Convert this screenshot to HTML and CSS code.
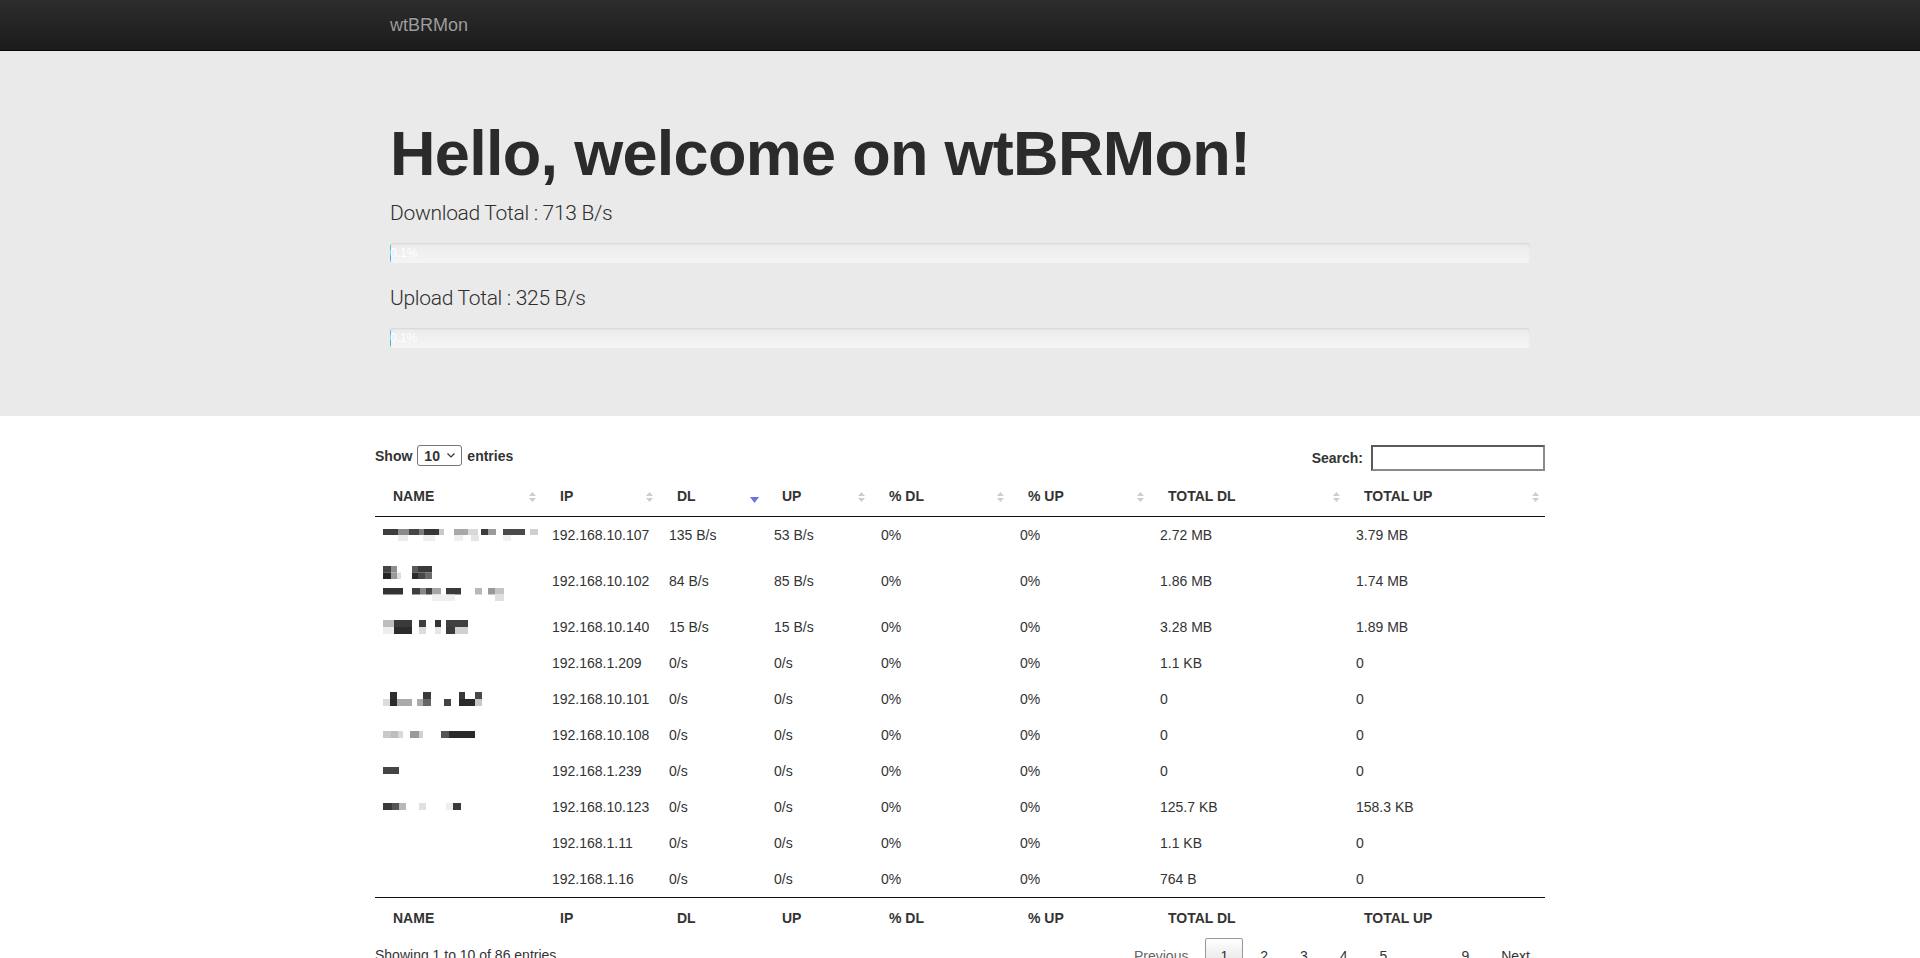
FILE: index.html
```html
<!DOCTYPE html>
<html lang="en">
<head>
<meta charset="utf-8">
<title>wtBRMon</title>
<link rel="stylesheet" href="styles.css">
</head>
<body>
<nav class="navbar">
  <div class="container">
    <a class="brand">wtBRMon</a>
  </div>
</nav>

<div class="jumbotron">
  <div class="container">
    <h1>Hello, welcome on wtBRMon!</h1>
    <p>Download Total : 713 B/s</p>
    <div class="progress"><div class="bar" style="width:0.1%">0.1%</div></div>
    <p>Upload Total : 325 B/s</p>
    <div class="progress"><div class="bar" style="width:0.1%">0.1%</div></div>
  </div>
</div>

<div class="dt">
  <div class="toolbar">
    <div class="length">Show <span class="select">10 <svg class="chev" width="8" height="5" viewBox="0 0 8 5"><polyline points="0.5,0.5 4,4 7.5,0.5" fill="none" stroke="#333" stroke-width="1.2"/></svg></span> entries</div>
    <div class="filter">Search: <span class="input"></span></div>
  </div>

  <table>
    <colgroup>
      <col class="c1"><col class="c2"><col class="c3"><col class="c4"><col class="c5"><col class="c6"><col class="c7"><col class="c8">
    </colgroup>
    <thead>
      <tr>
        <th>NAME<svg class="sort" viewBox="0 0 19 19"><polygon points="6,9 13,9 9.5,5" fill="#cdcdcd"/><polygon points="6,11 13,11 9.5,15" fill="#cdcdcd"/></svg></th>
        <th>IP<svg class="sort" viewBox="0 0 19 19"><polygon points="6,9 13,9 9.5,5" fill="#cdcdcd"/><polygon points="6,11 13,11 9.5,15" fill="#cdcdcd"/></svg></th>
        <th>DL<svg class="sort" viewBox="0 0 19 19"><polygon points="5,10 14,10 9.5,16" fill="#6f6fe2"/></svg></th>
        <th>UP<svg class="sort" viewBox="0 0 19 19"><polygon points="6,9 13,9 9.5,5" fill="#cdcdcd"/><polygon points="6,11 13,11 9.5,15" fill="#cdcdcd"/></svg></th>
        <th>% DL<svg class="sort" viewBox="0 0 19 19"><polygon points="6,9 13,9 9.5,5" fill="#cdcdcd"/><polygon points="6,11 13,11 9.5,15" fill="#cdcdcd"/></svg></th>
        <th>% UP<svg class="sort" viewBox="0 0 19 19"><polygon points="6,9 13,9 9.5,5" fill="#cdcdcd"/><polygon points="6,11 13,11 9.5,15" fill="#cdcdcd"/></svg></th>
        <th>TOTAL DL<svg class="sort" viewBox="0 0 19 19"><polygon points="6,9 13,9 9.5,5" fill="#cdcdcd"/><polygon points="6,11 13,11 9.5,15" fill="#cdcdcd"/></svg></th>
        <th>TOTAL UP<svg class="sort" viewBox="0 0 19 19"><polygon points="6,9 13,9 9.5,5" fill="#cdcdcd"/><polygon points="6,11 13,11 9.5,15" fill="#cdcdcd"/></svg></th>
      </tr>
    </thead>
    <tbody>
      <tr>
        <td><svg class="blur" width="160" height="12" viewBox="0 0 160 12">
          <rect x="0" y="0" width="15" height="6" fill="#3d3d3d"/><rect x="15" y="0" width="11" height="6" fill="#8a8a8a"/><rect x="26" y="0" width="10" height="6" fill="#454545"/><rect x="36" y="0" width="5" height="6" fill="#7a7a7a"/><rect x="41" y="0" width="15" height="6" fill="#363636"/><rect x="56" y="0" width="5" height="6" fill="#c8c8c8"/><rect x="71" y="0" width="14" height="6" fill="#a8a8a8"/><rect x="85" y="0" width="10" height="6" fill="#d8d8d8"/><rect x="98" y="0" width="7" height="6" fill="#3c3c3c"/><rect x="105" y="0" width="8" height="6" fill="#9a9a9a"/><rect x="120" y="0" width="22" height="6" fill="#4a4a4a"/><rect x="147" y="0" width="8" height="6" fill="#cfcfcf"/>
          <rect x="15" y="6" width="10" height="6" fill="#ececec"/><rect x="40" y="6" width="12" height="6" fill="#eeeeee"/><rect x="71" y="6" width="9" height="6" fill="#efefef"/><rect x="88" y="6" width="8" height="6" fill="#e5e5e5"/><rect x="120" y="6" width="8" height="6" fill="#f0f0f0"/>
        </svg></td>
        <td>192.168.10.107</td><td>135 B/s</td><td>53 B/s</td><td>0%</td><td>0%</td><td>2.72 MB</td><td>3.79 MB</td>
      </tr>
      <tr>
        <td><svg class="blur" width="160" height="40" viewBox="0 0 160 40">
          <rect x="0" y="5" width="8" height="6.5" fill="#444"/><rect x="8" y="5" width="6" height="6.5" fill="#8d8d8d"/><rect x="29" y="5" width="6" height="6.5" fill="#5a5a5a"/><rect x="35" y="5" width="14" height="6.5" fill="#3a3a3a"/>
          <rect x="0" y="11.5" width="8" height="6.5" fill="#262626"/><rect x="8" y="11.5" width="6" height="6.5" fill="#999"/><rect x="14" y="11.5" width="4" height="6.5" fill="#ddd"/><rect x="29" y="11.5" width="6" height="6.5" fill="#2a2a2a"/><rect x="35" y="11.5" width="7" height="6.5" fill="#484848"/><rect x="42" y="11.5" width="7" height="6.5" fill="#6a6a6a"/>
          <rect x="0" y="27" width="20" height="6.5" fill="#333"/><rect x="29" y="27" width="8" height="6.5" fill="#3e3e3e"/><rect x="37" y="27" width="6" height="6.5" fill="#888"/><rect x="43" y="27" width="6" height="6.5" fill="#444"/><rect x="49" y="27" width="9" height="6.5" fill="#a5a5a5"/><rect x="63" y="27" width="15" height="6.5" fill="#3a3a3a"/><rect x="92" y="27" width="7" height="6.5" fill="#b8b8b8"/><rect x="105" y="27" width="7" height="6.5" fill="#9a9a9a"/><rect x="112" y="27" width="9" height="6.5" fill="#c4c4c4"/>
          <rect x="49" y="33.5" width="23" height="6.5" fill="#efefef"/><rect x="112" y="33.5" width="9" height="6.5" fill="#e0e0e0"/>
        </svg></td>
        <td>192.168.10.102</td><td>84 B/s</td><td>85 B/s</td><td>0%</td><td>0%</td><td>1.86 MB</td><td>1.74 MB</td>
      </tr>
      <tr>
        <td><svg class="blur" width="160" height="14" viewBox="0 0 160 14">
          <rect x="0" y="0" width="11" height="7" fill="#bdbdbd"/><rect x="11" y="0" width="18" height="7" fill="#3a3a3a"/><rect x="36" y="0" width="7" height="7" fill="#3d3d3d"/><rect x="52" y="0" width="6" height="7" fill="#333"/><rect x="63" y="0" width="22" height="7" fill="#3f3f3f"/>
          <rect x="0" y="7" width="11" height="7" fill="#eee"/><rect x="11" y="7" width="18" height="7" fill="#2c2c2c"/><rect x="36" y="7" width="7" height="7" fill="#dcdcdc"/><rect x="52" y="7" width="6" height="7" fill="#e6e6e6"/><rect x="63" y="7" width="9" height="7" fill="#3a3a3a"/><rect x="72" y="7" width="13" height="7" fill="#d0d0d0"/>
        </svg></td>
        <td>192.168.10.140</td><td>15 B/s</td><td>15 B/s</td><td>0%</td><td>0%</td><td>3.28 MB</td><td>1.89 MB</td>
      </tr>
      <tr>
        <td></td>
        <td>192.168.1.209</td><td>0/s</td><td>0/s</td><td>0%</td><td>0%</td><td>1.1 KB</td><td>0</td>
      </tr>
      <tr>
        <td><svg class="blur" width="160" height="14" viewBox="0 0 160 14">
          <rect x="7" y="0" width="7" height="7" fill="#2e2e2e"/><rect x="40" y="0" width="8" height="7" fill="#3a3a3a"/><rect x="76" y="0" width="6" height="7" fill="#3a3a3a"/><rect x="92" y="0" width="7" height="7" fill="#484848"/>
          <rect x="0" y="7" width="7" height="7" fill="#dcdcdc"/><rect x="7" y="7" width="7" height="7" fill="#2a2a2a"/><rect x="14" y="7" width="15" height="7" fill="#aaa"/><rect x="34" y="7" width="6" height="7" fill="#aaa"/><rect x="40" y="7" width="8" height="7" fill="#666"/><rect x="61" y="7" width="7" height="7" fill="#444"/><rect x="76" y="7" width="16" height="7" fill="#2a2a2a"/><rect x="92" y="7" width="7" height="7" fill="#c8c8c8"/>
        </svg></td>
        <td>192.168.10.101</td><td>0/s</td><td>0/s</td><td>0%</td><td>0%</td><td>0</td><td>0</td>
      </tr>
      <tr>
        <td><svg class="blur" width="160" height="8" viewBox="0 0 160 8">
          <rect x="0" y="0" width="8" height="7" fill="#c9c9c9"/><rect x="8" y="0" width="7" height="7" fill="#bdbdbd"/><rect x="15" y="0" width="5" height="7" fill="#d9d9d9"/><rect x="27" y="0" width="9" height="7" fill="#9a9a9a"/><rect x="36" y="0" width="4" height="7" fill="#d0d0d0"/><rect x="58" y="0" width="8" height="7" fill="#555"/><rect x="66" y="0" width="26" height="7" fill="#2a2a2a"/>
        </svg></td>
        <td>192.168.10.108</td><td>0/s</td><td>0/s</td><td>0%</td><td>0%</td><td>0</td><td>0</td>
      </tr>
      <tr>
        <td><svg class="blur" width="160" height="8" viewBox="0 0 160 8">
          <rect x="0" y="0" width="16" height="7" fill="#444"/>
        </svg></td>
        <td>192.168.1.239</td><td>0/s</td><td>0/s</td><td>0%</td><td>0%</td><td>0</td><td>0</td>
      </tr>
      <tr>
        <td><svg class="blur" width="160" height="8" viewBox="0 0 160 8">
          <rect x="0" y="0" width="9" height="7" fill="#3a3a3a"/><rect x="9" y="0" width="7" height="7" fill="#555"/><rect x="16" y="0" width="7" height="7" fill="#b8b8b8"/><rect x="36" y="0" width="7" height="7" fill="#e0e0e0"/><rect x="63" y="0" width="7" height="7" fill="#eee"/><rect x="70" y="0" width="8" height="7" fill="#3a3a3a"/>
        </svg></td>
        <td>192.168.10.123</td><td>0/s</td><td>0/s</td><td>0%</td><td>0%</td><td>125.7 KB</td><td>158.3 KB</td>
      </tr>
      <tr>
        <td></td>
        <td>192.168.1.11</td><td>0/s</td><td>0/s</td><td>0%</td><td>0%</td><td>1.1 KB</td><td>0</td>
      </tr>
      <tr>
        <td></td>
        <td>192.168.1.16</td><td>0/s</td><td>0/s</td><td>0%</td><td>0%</td><td>764 B</td><td>0</td>
      </tr>
    </tbody>
    <tfoot>
      <tr>
        <th>NAME</th><th>IP</th><th>DL</th><th>UP</th><th>% DL</th><th>% UP</th><th>TOTAL DL</th><th>TOTAL UP</th>
      </tr>
    </tfoot>
  </table>

  <div class="bottom">
    <div class="info">Showing 1 to 10 of 86 entries</div>
    <div class="paginate">
      <a class="pb disabled">Previous</a><span class="pages"><a class="pb current">1</a><a class="pb">2</a><a class="pb">3</a><a class="pb">4</a><a class="pb">5</a><span class="ellipsis">…</span><a class="pb">9</a></span><a class="pb">Next</a>
    </div>
  </div>
</div>
</body>
</html>
```

FILE: styles.css
```css
* {
  box-sizing: border-box;
}

body {
  margin: 0;
  font-family: "Liberation Sans", Arial, Helvetica, sans-serif;
  font-size: 14px;
  line-height: 20px;
  color: #333;
  background: #fff;
}

.container {
  width: 1170px;
  margin: 0 auto;
  padding: 0 15px;
}

/* navbar */
.navbar {
  height: 51px;
  background: linear-gradient(to bottom, #2d2d2d 0%, #1b1b1b 100%);
  border-bottom: 1px solid #080808;
}

.brand {
  display: block;
  width: max-content;
  margin-left: -15px;
  padding: 15px;
  font-size: 18px;
  line-height: 20px;
  color: #9d9d9d;
  text-shadow: 0 -1px 0 rgba(0, 0, 0, 0.25);
}

/* jumbotron */
.jumbotron {
  background: #eaeaea;
  padding: 48px 0;
  margin-bottom: 29px;
}

.jumbotron h1 {
  margin: 20px 0 10px;
  font-size: 63px;
  line-height: 1.1;
  font-weight: bold;
  letter-spacing: -0.7px;
  color: #2b2b2b;
}

.jumbotron p {
  margin: 0 0 15px;
  font-family: Roboto, "Liberation Sans", sans-serif;
  font-size: 21px;
  line-height: 30px;
  font-weight: 300;
  letter-spacing: -0.3px;
  color: #2e2e2e;
}

.progress {
  height: 20px;
  margin-bottom: 20px;
  overflow: hidden;
  border-radius: 4px;
  background: linear-gradient(to bottom, #ebebeb 0%, #f5f5f5 100%);
  box-shadow: inset 0 1px 2px rgba(0, 0, 0, 0.1);
}

.bar {
  height: 100%;
  font-family: "Liberation Sans", Arial, sans-serif;
  font-size: 12px;
  line-height: 20px;
  color: #fff;
  text-align: center;
  white-space: nowrap;
  background: linear-gradient(to bottom, #5bc0de 0%, #31b0d5 100%);
}

/* datatable */
.dt {
  width: 1170px;
  margin: 0 auto;
}

.toolbar {
  display: flex;
  justify-content: space-between;
  align-items: flex-start;
  height: 26px;
  margin-bottom: 5px;
  font-weight: bold;
}

.length {
  display: flex;
  align-items: center;
  gap: 5px;
  height: 21px;
}

.select {
  display: inline-flex;
  align-items: center;
  justify-content: space-between;
  width: 45px;
  height: 21px;
  padding: 0 6px 0 6px;
  border: 1px solid #767676;
  border-radius: 3px;
  background: #fff;
  font-weight: bold;
}

.chev {
  display: block;
}

.filter {
  display: flex;
  align-items: center;
  gap: 8px;
  height: 26px;
}

.input {
  display: block;
  width: 174px;
  height: 26px;
  border: 2px solid #6f6f6f;
  border-color: #5a5a5a #8a8a8a #8a8a8a #5a5a5a;
  background: #fff;
}

table {
  width: 1170px;
  table-layout: fixed;
  border-collapse: separate;
  border-spacing: 0;
}

.c1 { width: 167px; }
.c2 { width: 117px; }
.c3 { width: 105px; }
.c4 { width: 107px; }
.c5 { width: 139px; }
.c6 { width: 140px; }
.c7 { width: 196px; }
.c8 { width: 199px; }

th {
  position: relative;
  padding: 10px 18px;
  text-align: left;
  font-weight: bold;
  white-space: nowrap;
}

thead th {
  border-bottom: 1px solid #111;
}

tfoot th {
  padding: 10px 18px 6px;
  border-top: 1px solid #111;
}

.sort {
  position: absolute;
  right: 0;
  top: 50%;
  width: 19px;
  height: 19px;
  margin-top: -9.5px;
}

td {
  padding: 8px 10px;
  vertical-align: middle;
  white-space: nowrap;
}

.blur {
  display: block;
  margin-left: -2px;
}

.bottom {
  display: flex;
  justify-content: space-between;
  align-items: flex-start;
}

.info {
  padding-top: 10.5px;
}

.paginate {
  display: flex;
  align-items: baseline;
  padding-top: 3.5px;
}

.pages {
  display: flex;
  align-items: baseline;
}

.pb {
  display: block;
  min-width: 21px;
  padding: 7px 14px;
  margin-left: 2px;
  text-align: center;
  color: #333;
  border: 1px solid transparent;
  border-radius: 2px;
}

.pb.current {
  border-color: #979797;
  background: linear-gradient(to bottom, #fff 0%, #dcdcdc 100%);
}

.pb.disabled {
  color: #666;
}

.ellipsis {
  padding: 0 14px;
}
```
